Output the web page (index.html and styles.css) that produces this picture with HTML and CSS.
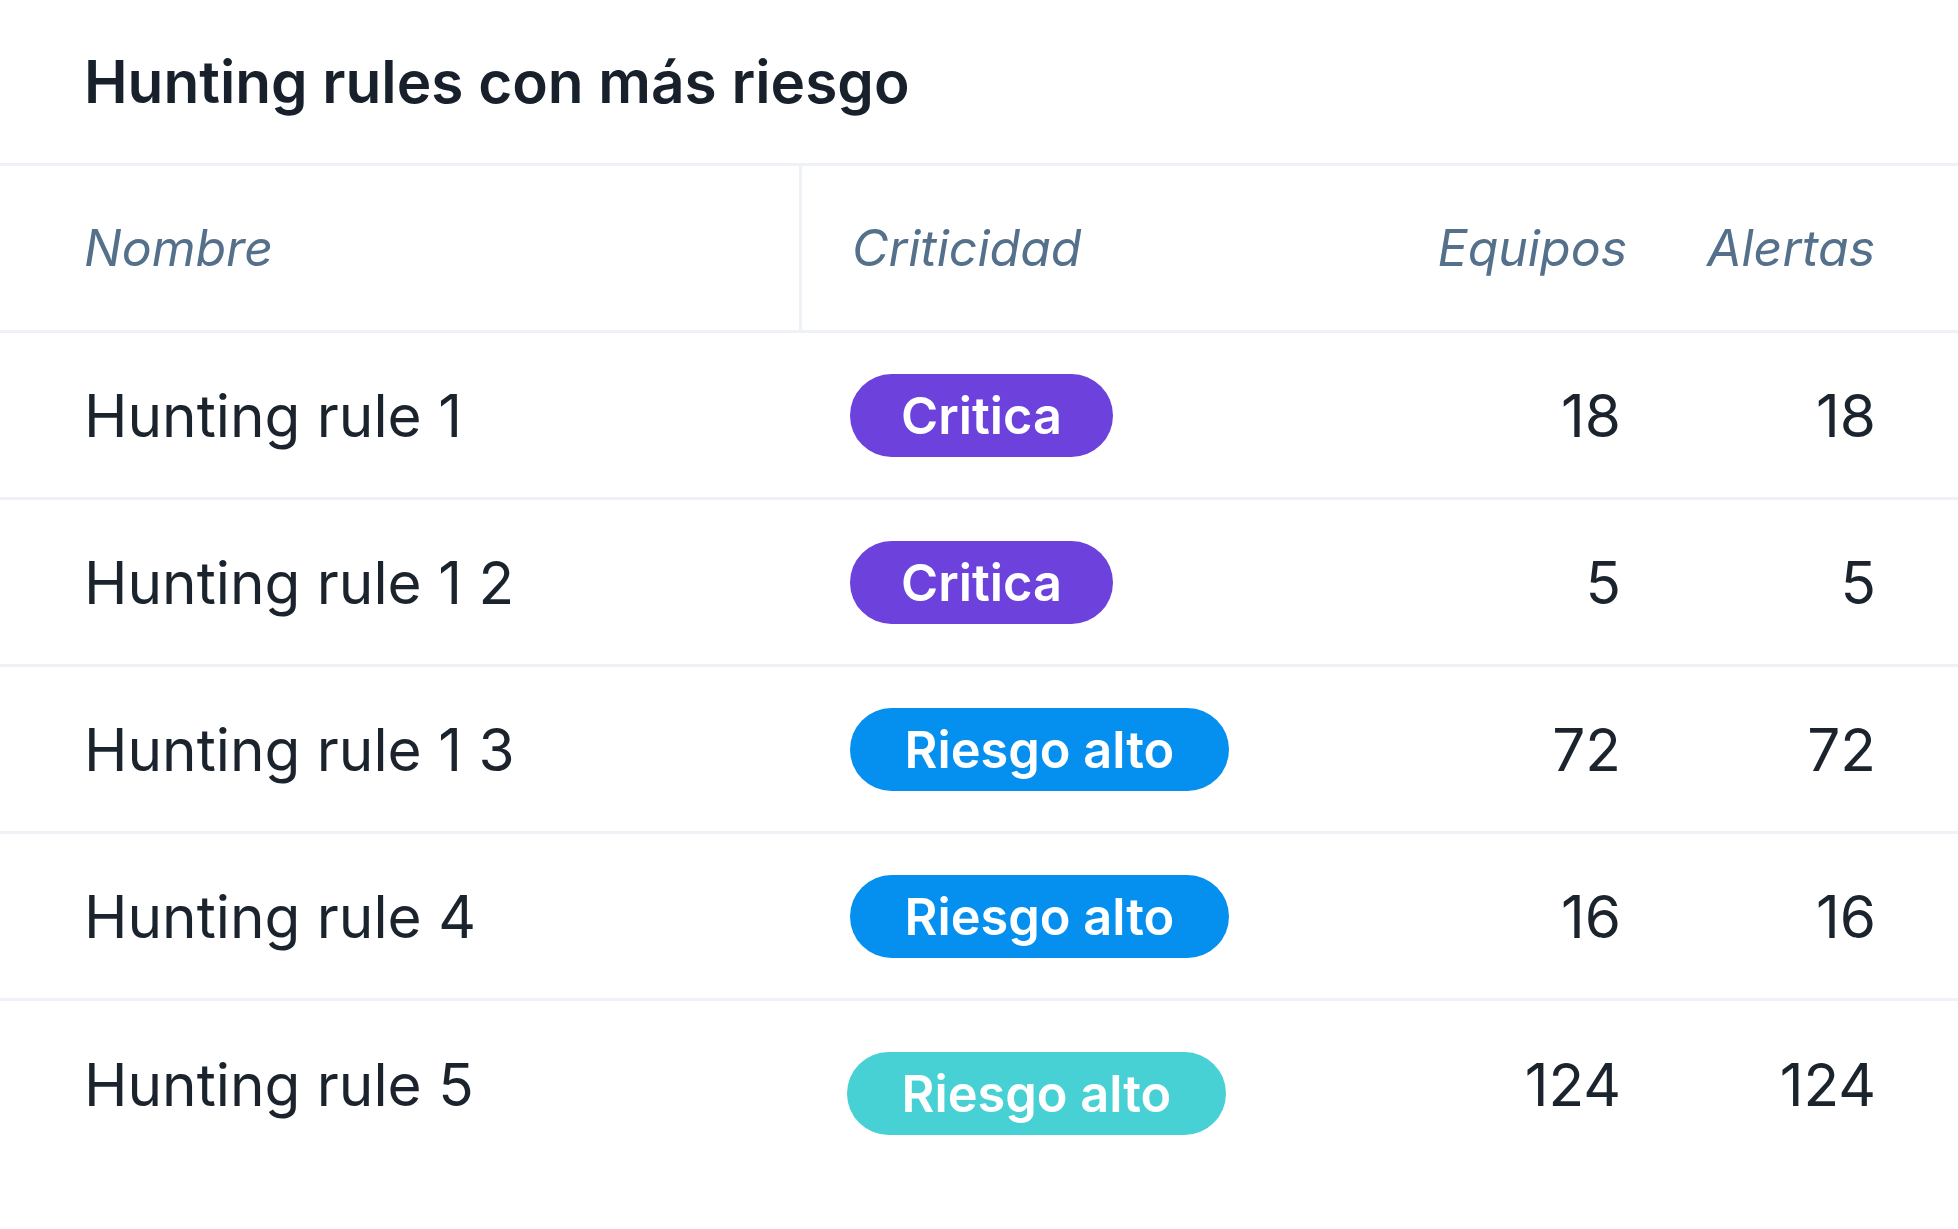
FILE: index.html
```html
<!DOCTYPE html>
<html lang="es">
<head>
<meta charset="utf-8">
<title>Hunting rules con más riesgo</title>
<link rel="stylesheet" href="styles.css">
</head>
<body>
<section class="card">
  <h1 class="card-title">Hunting rules con más riesgo</h1>
  <div class="table">
    <div class="row head">
      <div class="cell name">Nombre</div>
      <div class="cell crit">Criticidad</div>
      <div class="cell num">Equipos</div>
      <div class="cell num last">Alertas</div>
    </div>
    <div class="row">
      <div class="cell name">Hunting rule 1</div>
      <div class="cell crit"><span class="badge critical">Critica</span></div>
      <div class="cell num">18</div>
      <div class="cell num last">18</div>
    </div>
    <div class="row">
      <div class="cell name">Hunting rule 1 2</div>
      <div class="cell crit"><span class="badge critical">Critica</span></div>
      <div class="cell num">5</div>
      <div class="cell num last">5</div>
    </div>
    <div class="row">
      <div class="cell name">Hunting rule 1 3</div>
      <div class="cell crit"><span class="badge high">Riesgo alto</span></div>
      <div class="cell num">72</div>
      <div class="cell num last">72</div>
    </div>
    <div class="row">
      <div class="cell name">Hunting rule 4</div>
      <div class="cell crit"><span class="badge high">Riesgo alto</span></div>
      <div class="cell num">16</div>
      <div class="cell num last">16</div>
    </div>
    <div class="row final">
      <div class="cell name">Hunting rule 5</div>
      <div class="cell crit"><span class="badge medium">Riesgo alto</span></div>
      <div class="cell num">124</div>
      <div class="cell num last">124</div>
    </div>
  </div>
</section>
</body>
</html>
```

FILE: styles.css
```css
* { box-sizing: border-box; }

html, body {
  margin: 0;
  padding: 0;
  background: #ffffff;
}

body {
  font-family: Inter, "Noto Sans", "Liberation Sans", sans-serif;
  color: #1b232d;
}

.card {
  width: 1958px;
}

.card-title {
  margin: 0;
  height: 163px;
  display: flex;
  align-items: center;
  padding-left: 84px;
  font-size: 58.5px;
  font-weight: 600;
  color: #18212b;
  letter-spacing: 0;
}

.table {
  border-top: 3px solid #eef1f5;
}

.row {
  display: grid;
  grid-template-columns: 802px 1fr 220px 337px;
  height: 167px;
  border-bottom: 3px solid #eef1f5;
}

.row.final {
  border-bottom: none;
}

.cell {
  display: flex;
  align-items: center;
  font-size: 58.5px;
  font-weight: 400;
}

.cell.name {
  padding-left: 84px;
}

.cell.crit {
  padding-left: 48px;
}

.cell.num {
  justify-content: flex-end;
}

.cell.last {
  padding-right: 82px;
}

.row.head .cell {
  font-size: 50px;
  font-style: italic;
  color: #54708b;
}

.row.head .cell.name {
  border-right: 3px solid #eef1f5;
}

.row.head .cell.crit {
  padding-left: 50px;
}

.row.head .cell.last {
  padding-right: 83px;
}

.row.head .cell.num:not(.last) {
  margin-right: -6px;
}

.badge {
  display: inline-flex;
  align-items: center;
  justify-content: center;
  height: 83px;
  padding: 0 51px;
  border-radius: 42px;
  color: #ffffff;
  font-size: 50.5px;
  font-weight: 600;
}

.badge.critical { background: #6c41dc; }
.badge.high {
  background: #0590f0;
  padding: 0 54.5px;
}
.badge.medium {
  background: #48d1d4;
  padding: 0 54.5px;
  margin-left: -3px;
  margin-top: 18px;
}
```
